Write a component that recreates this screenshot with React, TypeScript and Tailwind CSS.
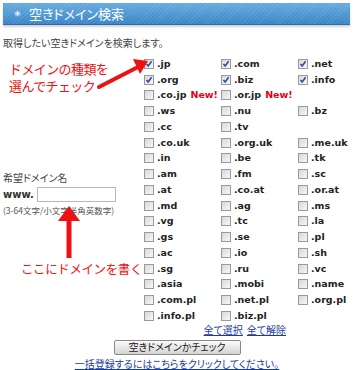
import React from 'react';

const jp = "font-['Noto_Sans_CJK_JP','Noto_Sans',sans-serif]";

type Domain = { name: string; checked?: boolean; isNew?: boolean } | null;

const rows: Domain[][] = [
  [{ name: '.jp', checked: true }, { name: '.com', checked: true }, { name: '.net', checked: true }],
  [{ name: '.org', checked: true }, { name: '.biz', checked: true }, { name: '.info', checked: true }],
  [{ name: '.co.jp', isNew: true }, { name: '.or.jp', isNew: true }, null],
  [{ name: '.ws' }, { name: '.nu' }, { name: '.bz' }],
  [{ name: '.cc' }, { name: '.tv' }, null],
  [{ name: '.co.uk' }, { name: '.org.uk' }, { name: '.me.uk' }],
  [{ name: '.in' }, { name: '.be' }, { name: '.tk' }],
  [{ name: '.am' }, { name: '.fm' }, { name: '.sc' }],
  [{ name: '.at' }, { name: '.co.at' }, { name: '.or.at' }],
  [{ name: '.md' }, { name: '.ag' }, { name: '.ms' }],
  [{ name: '.vg' }, { name: '.tc' }, { name: '.la' }],
  [{ name: '.gs' }, { name: '.se' }, { name: '.pl' }],
  [{ name: '.ac' }, { name: '.io' }, { name: '.sh' }],
  [{ name: '.sg' }, { name: '.ru' }, { name: '.vc' }],
  [{ name: '.asia' }, { name: '.mobi' }, { name: '.name' }],
  [{ name: '.com.pl' }, { name: '.net.pl' }, { name: '.org.pl' }],
  [{ name: '.info.pl' }, { name: '.biz.pl' }, null],
];

function Box({ checked }: { checked?: boolean }) {
  return (
    <span className="relative inline-block w-[10px] h-[10px] border border-[#9a9a9a] bg-gradient-to-br from-[#d8d8d8] to-[#f8f8f8] shrink-0">
      {checked && (
        <svg className="absolute left-0 top-0" width="8" height="8" viewBox="0 0 8 8">
          <path d="M1.5 4 L3.2 6 L6.6 1.2" fill="none" stroke="#2b4a9c" strokeWidth="1.5" />
        </svg>
      )}
    </span>
  );
}

export default function App() {
  return (
    <div className="relative w-[358px] h-[370px] bg-white overflow-hidden text-[#333]">
      {/* header */}
      <div className="ml-[3px] pt-[3px]">
        <div className="w-[347px] h-[22px] flex items-center border-b border-[#2d6ca6] shadow-[0_2px_2px_rgba(0,0,0,0.18)] bg-[repeating-linear-gradient(135deg,rgba(255,255,255,0.09)_0px,rgba(255,255,255,0.09)_1px,transparent_1px,transparent_3px),linear-gradient(to_bottom,#66acdf,#3a85c7)]">
          <svg className="ml-[11px]" width="7" height="7" viewBox="0 0 7 7">
            <circle cx="3.5" cy="3.5" r="3" fill="#8fc0e8" />
            <path d="M3.5 1.5v4M1.5 3.5h4" stroke="#e8f3fc" strokeWidth="1" />
          </svg>
          <span className={`${jp} ml-[8px] text-[13px] text-white leading-none [font-feature-settings:'palt']`}>空きドメイン検索</span>
        </div>
      </div>

      <p className={`${jp} ml-[3px] mt-[12px] text-[10px] leading-[12px] text-[#444] [font-feature-settings:'palt']`}>
        取得したい空きドメインを検索します。
      </p>

      <div className="flex mt-[7px]">
        <div className="w-[144px] pl-[3px] flex flex-col justify-center pt-[8px]">
          <div className={`${jp} text-[10px] leading-[12px] text-[#444] [font-feature-settings:'palt']`}>希望ドメイン名</div>
          <div className="flex items-center mt-[3px]">
            <span className="font-['DejaVu_Sans',sans-serif] font-bold text-[10px] text-[#333]">www.</span>
            <input className="ml-[3px] w-[79px] h-[15px] border border-[#b8b8b8] bg-white outline-none" />
          </div>
          <div className={`${jp} mt-[3px] text-[8.5px] leading-[10px] text-[#555] whitespace-nowrap [font-feature-settings:'palt']`}>
            (3-64文字/小文字半角英数字)
          </div>
        </div>
        <div className="grid grid-cols-[77px_77px_60px]">
          {rows.map((row, r) =>
            row.map((d, c) => (
              <div key={`${r}-${c}`} className="h-[15.75px] flex items-center">
                {d && (
                  <>
                    <Box checked={d.checked} />
                    <span className="ml-[3px] font-['DejaVu_Sans',sans-serif] font-bold text-[9.5px] text-[#222] whitespace-nowrap">
                      {d.name}
                      {d.isNew && <span className="ml-[4px] text-[#e60012]">New!</span>}
                    </span>
                  </>
                )}
              </div>
            ))
          )}
        </div>
      </div>

      <div className={`${jp} flex justify-end gap-[4px] pr-[72px] text-[10px] leading-[12px] text-[#1a3ca0] [font-feature-settings:'palt']`}>
        <a className="underline">全て選択</a>
        <a className="underline">全て解除</a>
      </div>
      <div className="flex justify-center mt-[4px] pr-[4px]">
        <button className={`${jp} w-[127px] h-[15px] border border-[#8a8a8a] rounded-[2px] bg-gradient-to-b from-[#fbfbfb] to-[#d4d4d4] text-[10px] leading-none text-[#222] [font-feature-settings:'palt']`}>
          空きドメインかチェック
        </button>
      </div>
      <div className={`${jp} text-center mt-[3px] pr-[4px] text-[10px] leading-[12px] text-[#1a3ca0] [font-feature-settings:'palt']`}>
        <a className="underline">一括登録するにはこちらをクリックしてください。</a>
      </div>

      {/* annotations */}
      <div className={`${jp} absolute left-[9px] top-[60px] text-[13px] leading-[17px] text-[#ee1111] tracking-[-0.6px]`}>
        <div>ドメインの種類を</div>
        <div>選んでチェック</div>
      </div>
      <svg className="absolute left-0 top-0 pointer-events-none" width="358" height="370">
        <line x1="99" y1="87" x2="138" y2="67" stroke="#ee1111" strokeWidth="4" strokeLinecap="round" />
        <polygon points="148,61 133,59 140,74" fill="#ee1111" />
        <line x1="69" y1="258" x2="69" y2="218" stroke="#ee1111" strokeWidth="5" />
        <polygon points="69,206 58,221 80,221" fill="#ee1111" />
      </svg>
      <div className={`${jp} absolute left-[21px] top-[261px] text-[12.5px] leading-[16px] text-[#ee1111] tracking-[-0.4px]`}>
        ここにドメインを書く
      </div>
    </div>
  );
}
